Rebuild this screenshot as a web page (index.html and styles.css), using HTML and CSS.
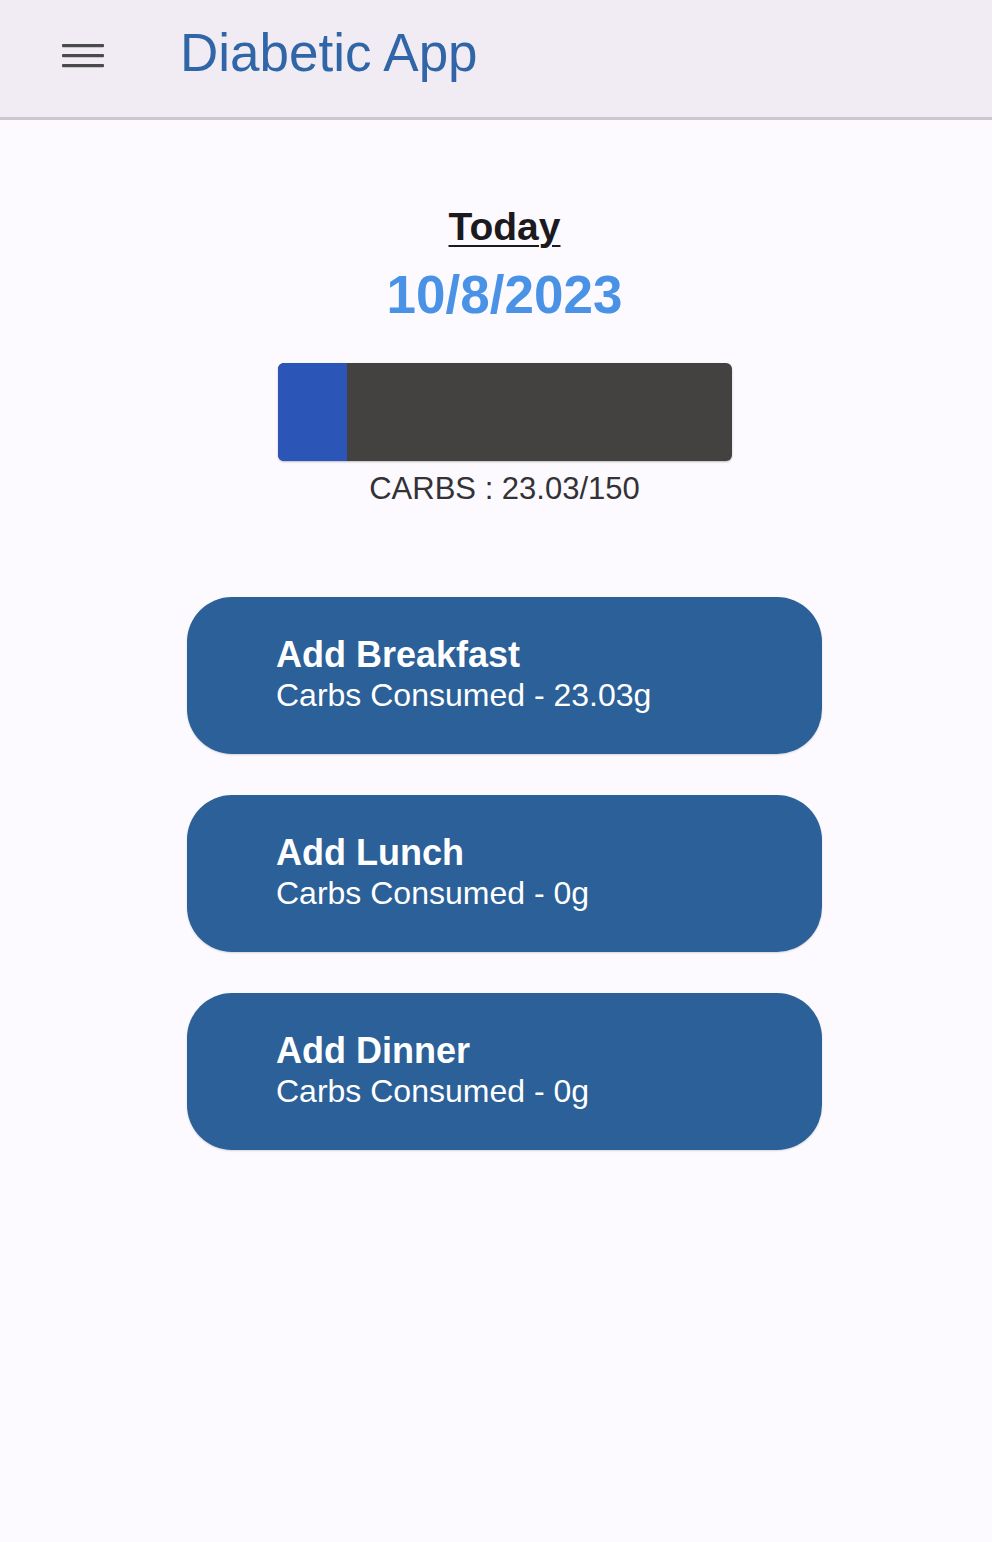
FILE: index.html
```html
<!DOCTYPE html>
<html lang="en">
<head>
<meta charset="utf-8">
<title>Diabetic App</title>
<link rel="stylesheet" href="styles.css">
</head>
<body>
<header class="appbar">
  <button class="menu-btn" aria-label="Menu">
    <svg width="42" height="24" viewBox="0 0 42 24" aria-hidden="true">
      <rect x="0" y="0" width="42" height="3.2" rx="1" fill="#4a4a4c"/>
      <rect x="0" y="10" width="42" height="3.2" rx="1" fill="#4a4a4c"/>
      <rect x="0" y="20" width="42" height="3.2" rx="1" fill="#4a4a4c"/>
    </svg>
  </button>
  <h1 class="app-title">Diabetic App</h1>
</header>
<main class="content">
  <div class="today">Today</div>
  <div class="date">10/8/2023</div>
  <div class="bar">
    <div class="bar-fill" style="width: 15.35%"></div>
  </div>
  <div class="bar-label">CARBS : 23.03/150</div>
  <div class="meals">
    <button class="meal">
      <span class="meal-title">Add Breakfast</span>
      <span class="meal-sub">Carbs Consumed - 23.03g</span>
    </button>
    <button class="meal">
      <span class="meal-title">Add Lunch</span>
      <span class="meal-sub">Carbs Consumed - 0g</span>
    </button>
    <button class="meal">
      <span class="meal-title">Add Dinner</span>
      <span class="meal-sub">Carbs Consumed - 0g</span>
    </button>
  </div>
</main>
</body>
</html>
```
FILE: styles.css
```css
* { box-sizing: border-box; }
html, body {
  margin: 0;
  padding: 0;
  background: #fcfaff;
  font-family: "Liberation Sans", Arial, sans-serif;
}
body { min-height: 1542px; }

.appbar {
  height: 120px;
  background: #f1ecf3;
  border-bottom: 3px solid #cbc7ce;
  display: flex;
  align-items: flex-start;
  padding: 0 0 0 62px;
}
.menu-btn {
  margin-top: 44px;
  padding: 0;
  border: 0;
  background: transparent;
  width: 42px;
  height: 24px;
  display: block;
}
.menu-btn svg { display: block; }
.app-title {
  margin: 22px 0 0 76px;
  font-weight: 400;
  font-size: 53px;
  line-height: 62px;
  color: #3066a8;
}

.content {
  width: 635px;
  margin-left: 187px;
  padding-top: 84px;
  display: flex;
  flex-direction: column;
  align-items: center;
}
.today {
  font-size: 39px;
  line-height: 46px;
  font-weight: 700;
  color: #1c1a1e;
  text-decoration: underline;
  text-decoration-thickness: 2px;
  text-underline-offset: 5px;
}
.date {
  margin-top: 14px;
  font-size: 53px;
  line-height: 62px;
  font-weight: 700;
  color: #4a92e6;
}
.bar {
  margin-top: 37px;
  width: 454px;
  height: 98px;
  background: #444241;
  border-radius: 6px;
  overflow: hidden;
  display: flex;
  box-shadow: 0 1px 2px rgba(0,0,0,0.25);
}
.bar-fill {
  height: 100%;
  background: #2b55b6;
}
.bar-label {
  margin-top: 10px;
  font-size: 31px;
  line-height: 36px;
  color: #333236;
}
.meals {
  margin-top: 90px;
  width: 100%;
  display: flex;
  flex-direction: column;
  gap: 41px;
}
.meal {
  width: 100%;
  height: 157px;
  border: 0;
  border-radius: 45px;
  background: #2b6099;
  color: #fff;
  font-family: inherit;
  text-align: left;
  padding: 37px 0 0 89px;
  display: flex;
  flex-direction: column;
  align-items: flex-start;
  justify-content: flex-start;
  box-shadow: 0 1px 2px rgba(0,0,0,0.15);
}
.meal-title {
  font-size: 36px;
  line-height: 42px;
  font-weight: 700;
}
.meal-sub {
  font-size: 32px;
  line-height: 38px;
  font-weight: 400;
}
```
